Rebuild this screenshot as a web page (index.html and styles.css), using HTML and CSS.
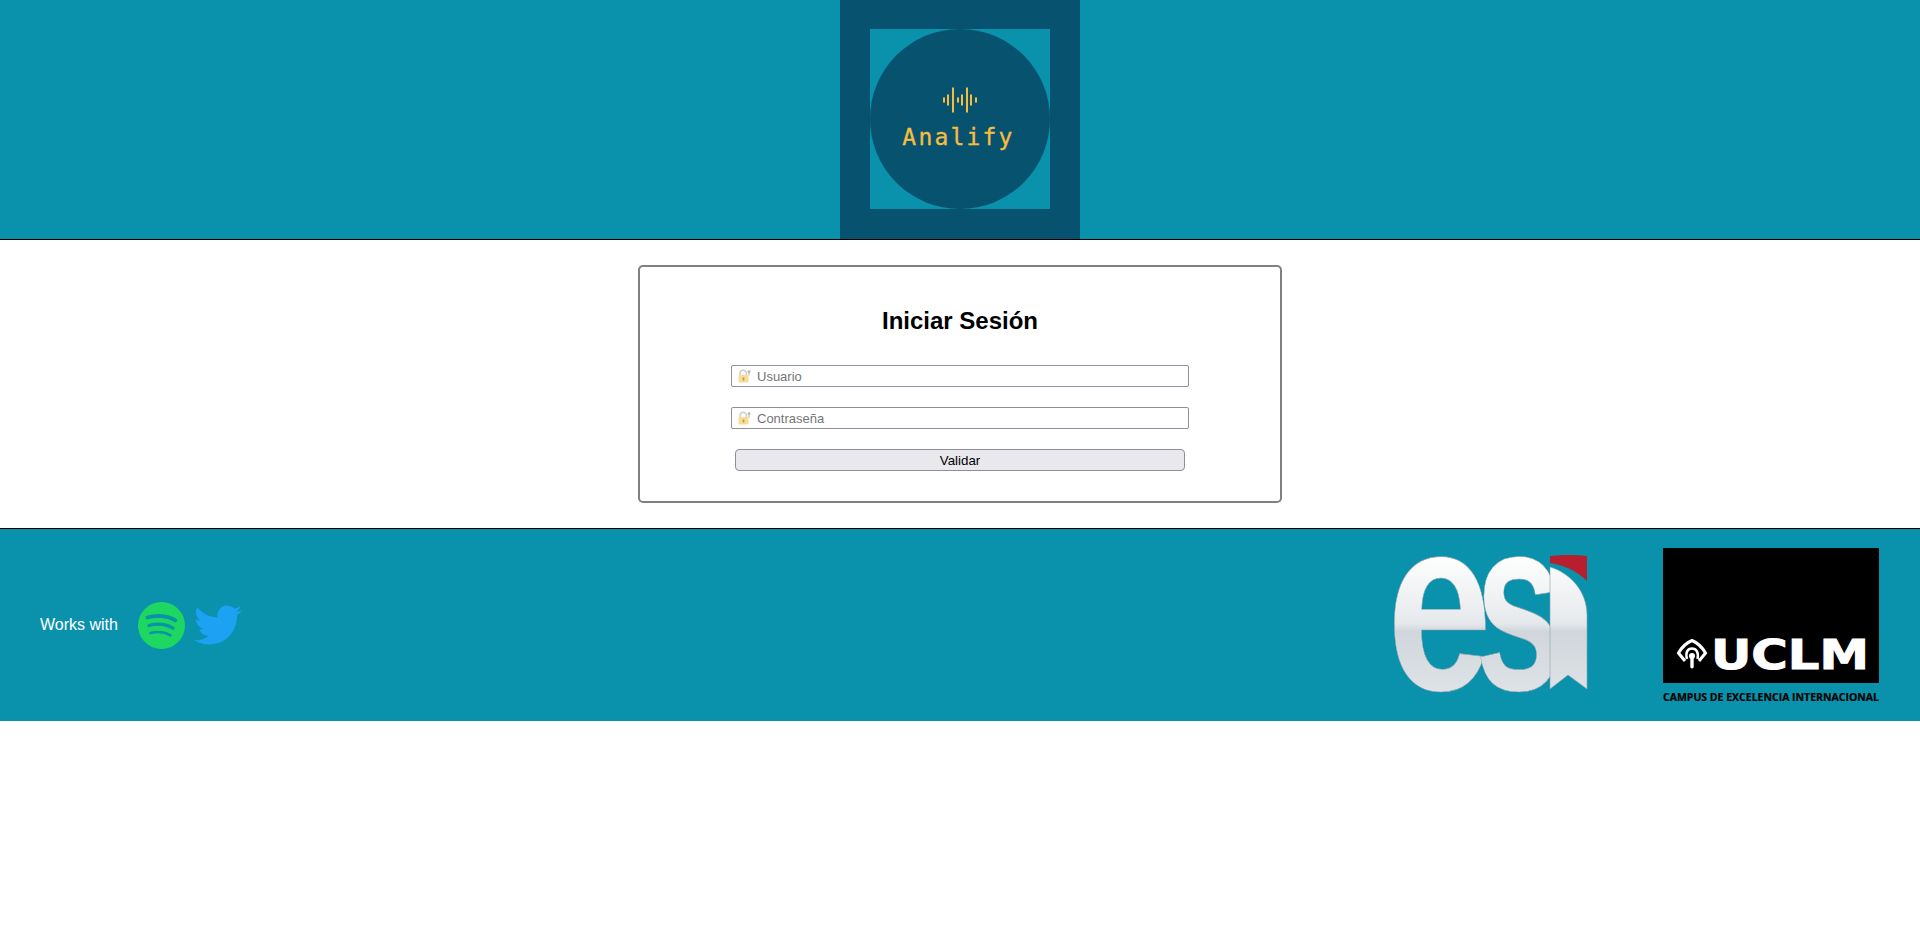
FILE: index.html
```html
<!DOCTYPE html>
<html lang="es">
<head>
<meta charset="utf-8">
<title>Analify</title>
<link rel="stylesheet" href="styles.css">
</head>
<body>
<header class="top">
  <div class="logo-frame">
    <div class="logo-plate">
      <div class="logo-disc">
        <svg class="wave" width="36" height="26" viewBox="0 0 36 26" aria-hidden="true">
          <g stroke="#f7bd3e" stroke-width="2">
            <path d="M2 10.500v5M6 7.500v11M11 0.500v25M16 10.500v5M20 7.500v11M25 0.500v25M29 7.500v11M34 10.500v5"/>
          </g>
        </svg>
        <span class="logo-name">Analify</span>
      </div>
    </div>
  </div>
</header>

<main class="page">
  <form class="card">
    <h1 class="card-title">Iniciar Sesión</h1>
    <div class="field">
      <svg class="lock" width="13" height="14" viewBox="0 0 13 14" aria-hidden="true">
        <path d="M2 7V4.500a3.200 3.200 0 0 1 6.400 0V7" fill="none" stroke="#cfccc2" stroke-width="1.500"/>
        <rect x="0.500" y="6" width="10" height="7.500" rx="1" fill="#fcdc92"/>
        <rect x="4.700" y="8.500" width="1.600" height="3" fill="#a89a72"/>
        <circle cx="11" cy="2.500" r="1.500" fill="#bdbdbd"/>
        <rect x="10.400" y="3" width="1.200" height="3.500" fill="#bdbdbd"/>
      </svg>
      <input class="text-input" type="text" placeholder="Usuario">
    </div>
    <div class="field">
      <svg class="lock" width="13" height="14" viewBox="0 0 13 14" aria-hidden="true">
        <path d="M2 7V4.500a3.200 3.200 0 0 1 6.400 0V7" fill="none" stroke="#cfccc2" stroke-width="1.500"/>
        <rect x="0.500" y="6" width="10" height="7.500" rx="1" fill="#fcdc92"/>
        <rect x="4.700" y="8.500" width="1.600" height="3" fill="#a89a72"/>
        <circle cx="11" cy="2.500" r="1.500" fill="#bdbdbd"/>
        <rect x="10.400" y="3" width="1.200" height="3.500" fill="#bdbdbd"/>
      </svg>
      <input class="text-input" type="password" placeholder="Contraseña">
    </div>
    <button class="submit" type="button">Validar</button>
  </form>
</main>

<footer class="bottom">
  <div class="works">
    <span class="works-label">Works with</span>
    <svg class="spotify" width="47" height="47" viewBox="0 0 47 47" aria-hidden="true">
      <circle cx="23.500" cy="23.500" r="23.500" fill="#1ed760"/>
      <g fill="none" stroke="#0a91ac" stroke-linecap="round">
        <path d="M9.500 15.500c9-2.600 20-1.800 28 2.800" stroke-width="3.800"/>
        <path d="M11 23.500c8-2.200 17-1.300 24 2.700" stroke-width="3.200"/>
        <path d="M12.500 31c7-1.700 14-1 20 2.300" stroke-width="2.500"/>
      </g>
    </svg>
    <svg class="twitter" width="48" height="48" viewBox="0 0 24 24" aria-hidden="true">
      <path fill="#1da1f2" d="M23.953 4.57a10 10 0 01-2.825.775 4.958 4.958 0 002.163-2.723c-.951.555-2.005.959-3.127 1.184a4.92 4.92 0 00-8.384 4.482C7.69 8.095 4.067 6.13 1.64 3.162a4.822 4.822 0 00-.666 2.475c0 1.71.87 3.213 2.188 4.096a4.904 4.904 0 01-2.228-.616v.06a4.923 4.923 0 003.946 4.827 4.996 4.996 0 01-2.212.085 4.936 4.936 0 004.604 3.417 9.867 9.867 0 01-6.102 2.105c-.39 0-.779-.023-1.17-.067a13.995 13.995 0 007.557 2.209c9.053 0 13.998-7.496 13.998-13.985 0-.21 0-.42-.015-.63A9.935 9.935 0 0024 4.59z"/>
    </svg>
  </div>
  <div class="partners">
    <svg class="esi" width="193" height="140" viewBox="0 0 193 140" role="img" aria-label="esi">
      <defs>
        <linearGradient id="metal" gradientUnits="userSpaceOnUse" x1="0" y1="0" x2="0" y2="140">
          <stop offset="0" stop-color="#ffffff"/>
          <stop offset="0.5" stop-color="#e6e9ec"/>
          <stop offset="0.56" stop-color="#d0d6dc"/>
          <stop offset="1" stop-color="#dfe3e7"/>
        </linearGradient>
        <linearGradient id="metal-text" gradientUnits="userSpaceOnUse" x1="0" y1="-141" x2="0" y2="3">
          <stop offset="0" stop-color="#ffffff"/>
          <stop offset="0.5" stop-color="#e6e9ec"/>
          <stop offset="0.56" stop-color="#d0d6dc"/>
          <stop offset="1" stop-color="#dfe3e7"/>
        </linearGradient>
      </defs>
      <text class="esi-letter" transform="translate(-7 137) scale(0.74 0.97)" x="0" y="0">e</text>
      <text class="esi-letter" transform="translate(81 137) scale(0.62 0.97)" x="0" y="0">s</text>
      <path d="M156 14C176 20 193 38 193 62V136L174 122L156 136Z" fill="url(#metal)" stroke="#8fa3ad" stroke-width="0.600"/>
      <path d="M156 3Q176 1 193 3V28C183 18 170 12 156 10Z" fill="#b71f2e"/>
    </svg>
    <svg class="uclm" width="217" height="158" viewBox="0 0 217 158" role="img" aria-label="UCLM Campus de Excelencia Internacional">
      <rect x="0" y="0" width="216" height="135" fill="#000"/>
      <g fill="none" stroke="#fff">
        <path d="M22 113L15.500 105C19 99 24 94.500 29 92.500C34 94.500 39 99 42.500 105L36 113" stroke-width="3"/>
        <path d="M24 111C22 104 25 100.500 29 100.500C33 100.500 36 104 34.500 111" stroke-width="2.500"/>
      </g>
      <circle cx="29" cy="108" r="3" fill="#fff"/>
      <rect x="27.300" y="108" width="3.400" height="12.500" rx="1.700" fill="#fff"/>
      <text class="uclm-mark" x="48" y="121" textLength="158" lengthAdjust="spacingAndGlyphs">UCLM</text>
      <text class="uclm-sub" x="0" y="153" textLength="216" lengthAdjust="spacingAndGlyphs">CAMPUS DE EXCELENCIA INTERNACIONAL</text>
    </svg>
  </div>
</footer>
</body>
</html>
```
FILE: styles.css
```css
* {
  box-sizing: border-box;
}

body {
  margin: 0;
  background: #fff;
  font-family: "Liberation Sans", Arial, sans-serif;
}

.top {
  display: flex;
  justify-content: center;
  height: 240px;
  background: #0a91ac;
  border-bottom: 1px solid #000;
}

.logo-frame {
  width: 240px;
  height: 239px;
  padding: 29px 30px 30px;
  background: #07536f;
}

.logo-plate {
  width: 180px;
  height: 180px;
  background: #0a91ac;
}

.logo-disc {
  display: flex;
  flex-direction: column;
  align-items: center;
  width: 180px;
  height: 180px;
  padding-top: 58px;
  border-radius: 50%;
  background: #07536f;
}

.wave {
  display: block;
}

.logo-name {
  margin-top: 11px;
  margin-left: -3px;
  font-family: "DejaVu Sans Mono", monospace;
  font-size: 23px;
  line-height: 26px;
  letter-spacing: 2.200px;
  color: #f7bd3e;
  -webkit-text-stroke: 0.300px #f7bd3e;
}

.page {
  display: flex;
  justify-content: center;
  padding: 25px 0;
}

.card {
  display: flex;
  flex-direction: column;
  align-items: center;
  width: 644px;
  height: 238px;
  padding-top: 40px;
  border: 2px solid #808080;
  border-radius: 5px;
}

.card-title {
  margin: 0 0 31px;
  font-size: 24px;
  line-height: 27px;
  font-weight: 700;
  color: #000;
}

.field {
  position: relative;
  margin-bottom: 20px;
}

.lock {
  position: absolute;
  left: 7px;
  top: 4px;
}

.text-input {
  display: block;
  width: 458px;
  height: 22px;
  padding: 0 4px 0 25px;
  border: 1px solid #8f8f9d;
  border-radius: 2px;
  background: #fff;
  font-family: inherit;
  font-size: 13px;
}

.text-input::placeholder {
  color: #757575;
  opacity: 1;
}

.submit {
  display: block;
  width: 450px;
  height: 22px;
  padding: 0;
  border: 1px solid #8f8f9d;
  border-radius: 4px;
  background: #e9e9ed;
  font-family: inherit;
  font-size: 13.333px;
  color: #000;
}

.bottom {
  display: flex;
  justify-content: space-between;
  align-items: center;
  height: 193px;
  padding: 0 40px;
  background: #0a91ac;
  border-top: 1px solid #000;
}

.works {
  display: flex;
  align-items: center;
}

.works-label {
  margin-right: 20px;
  font-size: 16px;
  color: #fff;
}

.spotify {
  display: block;
  margin-right: 9px;
}

.twitter {
  display: block;
}

.partners {
  display: flex;
  align-items: center;
  gap: 76px;
}

.esi {
  display: block;
  margin-top: -4px;
  overflow: visible;
}

.esi-letter {
  font-family: "Liberation Sans", Arial, sans-serif;
  font-size: 255px;
  font-weight: 700;
  fill: url(#metal-text);
  stroke: #8fa3ad;
  stroke-width: 0.600px;
}

.uclm {
  display: block;
  margin-bottom: -4px;
}

.uclm-mark {
  font-family: "DejaVu Sans", sans-serif;
  font-size: 41px;
  font-weight: 700;
  fill: #fff;
  stroke: #fff;
  stroke-width: 1px;
}

.uclm-sub {
  font-family: "Open Sans", sans-serif;
  font-size: 10px;
  font-weight: 700;
  fill: #000;
  stroke: #000;
  stroke-width: 0.200px;
}
```
